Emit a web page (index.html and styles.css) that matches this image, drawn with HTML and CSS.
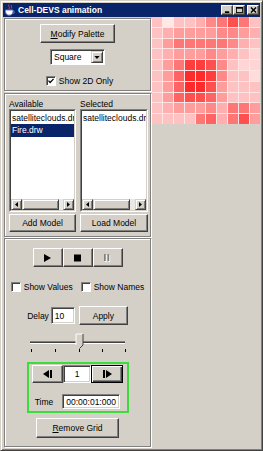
FILE: index.html
```html
<!DOCTYPE html>
<html>
	<head>
		<meta charset="utf-8">
		<title>Cell-DEVS animation</title>
		<link rel="stylesheet" href="styles.css">
	</head>
	<body>
		<div class="window">
			<!-- title bar -->
			<div class="titlebar">
				<svg class="app-icon" viewBox="0 0 12 12">
					<path d="M5 0.5 C3.5 2 6.5 3 5 4.8 M7.5 1 C6.5 2 8.5 3 7.2 4.5" stroke="#e04848" stroke-width="1" fill="none"/>
					<path d="M1.5 6 H9 V7.5 C9 10 7.2 11.2 5.2 11.2 C3.3 11.2 1.5 10 1.5 7.5 Z" fill="#fff" stroke="#6a74c8" stroke-width="1"/>
					<path d="M9 7 C11 7 11 9.5 8.6 9.6" stroke="#6a74c8" fill="none"/>
				</svg>
				<span class="title">Cell-DEVS animation</span>
				<div class="title-btns">
					<span class="tbtn"><svg viewBox="0 0 8 7"><rect x="1" y="5" width="5" height="2" fill="#000"/></svg></span>
					<span class="tbtn"><svg viewBox="0 0 8 7"><rect x="0.5" y="0.5" width="7" height="6" fill="none" stroke="#000"/><rect x="0" y="0" width="8" height="2" fill="#000"/></svg></span>
					<span class="tbtn tbtn-close"><svg viewBox="0 0 8 7"><path d="M1 0.5 L7 6.5 M7 0.5 L1 6.5" stroke="#000" stroke-width="1.6"/></svg></span>
				</div>
			</div>

			<div class="client">
				<div class="left">
					<!-- palette -->
					<div class="panel p-top">
						<button class="btn btn-palette"><u>M</u>odify Palette</button>
						<div class="combo">
							<span class="combo-text">Square</span>
							<span class="combo-arrow"><svg viewBox="0 0 7 4"><path d="M0 0 H7 L3.5 4 Z" fill="#000"/></svg></span>
						</div>
						<div class="checks-one">
							<span class="check"><span class="box"><svg viewBox="0 0 7 7"><path d="M0.5 3 L2.5 5.2 L6.5 1" stroke="#000" stroke-width="1.5" fill="none"/></svg></span>Show 2D Only</span>
						</div>
					</div>

					<!-- models -->
					<div class="panel p-models">
						<div class="model-col">
							<div class="list-label">Available</div>
							<div class="list">
								<div class="list-inner">
									<div class="list-items">
										<div class="item">satelliteclouds.drv</div>
										<div class="item sel">Fire.drw</div>
									</div>
									<div class="hscroll">
										<span class="sb-btn"><svg viewBox="0 0 3 5"><path d="M3 0 V5 L0 2.5 Z" fill="#000"/></svg></span>
										<span class="sb-thumb"></span>
										<span class="sb-track"></span>
										<span class="sb-btn"><svg viewBox="0 0 3 5"><path d="M0 0 V5 L3 2.5 Z" fill="#000"/></svg></span>
									</div>
								</div>
							</div>
							<button class="btn btn-model">Add Model</button>
						</div>
						<div class="model-col model-col-wide">
							<div class="list-label">Selected</div>
							<div class="list">
								<div class="list-inner">
									<div class="list-items">
										<div class="item">satelliteclouds.drv</div>
									</div>
									<div class="hscroll">
										<span class="sb-btn"><svg viewBox="0 0 3 5"><path d="M3 0 V5 L0 2.5 Z" fill="#000"/></svg></span>
										<span class="sb-thumb"></span>
										<span class="sb-track"></span>
										<span class="sb-btn"><svg viewBox="0 0 3 5"><path d="M0 0 V5 L3 2.5 Z" fill="#000"/></svg></span>
									</div>
								</div>
							</div>
							<button class="btn btn-model">Load Model</button>
						</div>
					</div>

					<!-- controls -->
					<div class="panel p-controls">
						<div class="media">
							<button class="btn btn-media"><svg viewBox="0 0 7 8"><path d="M0 0 L7 4 L0 8 Z" fill="#000"/></svg></button>
							<button class="btn btn-media"><svg viewBox="0 0 7 7"><rect width="7" height="7" fill="#000"/></svg></button>
							<button class="btn btn-media"><svg viewBox="0 0 8 9"><rect x="1" y="1" width="2" height="8" fill="#fff"/><rect x="5" y="1" width="2" height="8" fill="#fff"/><rect x="0" y="0" width="2" height="8" fill="#808080"/><rect x="4" y="0" width="2" height="8" fill="#808080"/></svg></button>
						</div>
						<div class="checks">
							<span class="check"><span class="box"></span>Show Values</span>
							<span class="check"><span class="box"></span>Show Names</span>
						</div>
						<div class="delay">
							<span>Delay</span>
							<span class="field delay-field">10</span>
							<button class="btn btn-apply">Apply</button>
						</div>
						<svg class="slider" viewBox="0 0 100 19">
							<rect x="2" y="8" width="95" height="1" fill="#808080"/>
							<rect x="2" y="9" width="95" height="1" fill="#404040"/>
							<rect x="2" y="10" width="95" height="1" fill="#fff"/>
							<path d="M48 1 H55 V12 L51.5 15.5 L48 12 Z" fill="#d4d0c8"/>
							<path d="M48 12 V1 H55" stroke="#fff" fill="none"/>
							<path d="M55 1 V12 L51.5 15.5" stroke="#404040" fill="none"/>
							<g fill="#000">
								<rect x="3" y="16" width="1" height="3"/>
								<rect x="27" y="16" width="1" height="3"/>
								<rect x="51" y="16" width="1" height="3"/>
								<rect x="74" y="16" width="1" height="3"/>
								<rect x="97" y="16" width="1" height="3"/>
							</g>
						</svg>
						<div class="stepbox">
							<div class="step-row">
								<button class="btn btn-step"><svg viewBox="0 0 9 8"><path d="M6 0 V8 L0 4 Z" fill="#000"/><rect x="7" y="0" width="2" height="8" fill="#000"/></svg></button>
								<span class="field step-field">1</span>
								<button class="btn btn-step btn-default"><svg viewBox="0 0 9 8"><rect x="0" y="0" width="2" height="8" fill="#000"/><path d="M3 0 V8 L9 4 Z" fill="#000"/></svg></button>
							</div>
							<div class="time-row">
								<span>Time</span>
								<span class="field time-field">00:00:01:000</span>
							</div>
						</div>
						<button class="btn btn-remove"><u>R</u>emove Grid</button>
					</div>
				</div>

				<div class="right">
					<div class="cells" id="cells"></div>
				</div>
			</div>
		</div>

		<script type="text/javascript">
			// intensity of each cell, 0 = almost white, 5 = full red
			var levels = [
				[1, 0, 1, 1, 1.5, 2.5, 3, 4, 3, 1],
				[1, 1.5, 2, 2, 2, 2, 2.5, 2.5, 2, 1.5],
				[1, 2, 3, 3, 3, 3, 3, 2.5, 1.5, 1],
				[1, 1.5, 2, 2, 2, 2.5, 2, 1.5, 1, 0.5],
				[1, 2, 3, 4.5, 4.5, 4, 2.5, 1, 0.5, 0.5],
				[1, 2, 3.5, 5, 5, 4.5, 2.5, 1, 1, 0.3],
				[1, 2, 3.5, 5, 5, 4, 2, 1, 1, 1],
				[1, 2, 3.5, 4, 4, 3.5, 2, 1, 1, 1],
				[1, 1.5, 2, 2, 2, 2.5, 1.5, 3, 3, 2],
				[1, 1, 1, 1, 3, 3.5, 1.5, 3, 4, 2]
			];
			var cells = document.getElementById("cells");
			for (var r = 0; r < levels.length; r++) {
				for (var c = 0; c < levels[r].length; c++) {
					var g = Math.round(232 - levels[r][c] * 38);
					var d = document.createElement("div");
					d.style.backgroundColor = "rgb(255," + g + "," + g + ")";
					cells.appendChild(d);
				}
			}
		</script>
	</body>
</html>
```

FILE: styles.css
```css
* {
	margin: 0;
	padding: 0;
	box-sizing: border-box;
}

body {
	background-color: #d4d0c8;
	font-family: "Liberation Sans", Arial, sans-serif;
	font-size: 8.5px;
	color: #000;
}

/* window frame */
.window {
	width: 263px;
	height: 451px;
	background-color: #d4d0c8;
	border: 1px solid;
	border-color: #d4d0c8 #404040 #404040 #d4d0c8;
	box-shadow: inset 1px 1px #fff, inset -1px -1px #808080;
	padding: 2px;
	display: flex;
	flex-direction: column;
}

.titlebar {
	height: 14px;
	background-color: #0a246a;
	display: flex;
	align-items: center;
	color: #fff;
	font-weight: bold;
}
.app-icon {
	width: 12px;
	height: 12px;
	margin-left: 1px;
}
.title {
	margin-left: 2px;
}
.title-btns {
	margin-left: auto;
	margin-right: 1px;
	display: flex;
}
.tbtn {
	width: 12px;
	height: 10px;
	background-color: #d4d0c8;
	border: 1px solid;
	border-color: #fff #404040 #404040 #fff;
	box-shadow: inset -1px -1px #808080;
	display: flex;
	align-items: center;
	justify-content: center;
}
.tbtn svg {
	width: 7px;
	height: 6px;
}
.tbtn-close {
	margin-left: 2px;
}

.client {
	flex: 1;
	display: flex;
}

.left {
	width: 149px;
	display: flex;
	flex-direction: column;
}
.right {
	flex: 1;
}

/* etched group panels */
.panel {
	margin: 0 1px;
	border: 1px solid #808080;
	box-shadow: inset 1px 1px #fff, 1px 1px #fff;
}

.p-top {
	margin-top: 1px;
	height: 73px;
	display: flex;
	flex-direction: column;
	align-items: center;
	padding-top: 5px;
}
.p-models {
	margin-top: 2px;
	height: 144px;
	display: flex;
	gap: 4px;
	padding: 5px 0 0 4px;
}
.p-controls {
	margin-top: 1px;
	height: 209px;
	display: flex;
	flex-direction: column;
	align-items: center;
	padding-top: 9px;
}

/* raised button */
.btn {
	font: inherit;
	color: #000;
	background-color: #d4d0c8;
	border: 1px solid;
	border-color: #fff #404040 #404040 #fff;
	box-shadow: inset -1px -1px #808080;
	display: flex;
	align-items: center;
	justify-content: center;
	padding: 0;
}
.btn-palette {
	width: 75px;
	height: 19px;
}

/* sunken field */
.field {
	background-color: #fff;
	border: 1px solid;
	border-color: #808080 #fff #fff #808080;
	box-shadow: inset 1px 1px #404040, inset -1px -1px #d4d0c8;
	display: flex;
	align-items: center;
}

.combo {
	margin-top: 6px;
	width: 55px;
	height: 16px;
	background-color: #fff;
	border: 1px solid;
	border-color: #808080 #fff #fff #808080;
	box-shadow: inset 1px 1px #404040;
	display: flex;
	align-items: center;
	padding: 1px 1px 1px 2px;
}
.combo-text {
	flex: 1;
	padding-left: 1px;
}
.combo-arrow {
	width: 12px;
	height: 12px;
	background-color: #d4d0c8;
	border: 1px solid;
	border-color: #d4d0c8 #404040 #404040 #d4d0c8;
	box-shadow: inset 1px 1px #fff, inset -1px -1px #808080;
	display: flex;
	align-items: center;
	justify-content: center;
}
.combo-arrow svg {
	width: 6px;
	height: 3px;
}

/* check boxes */
.checks-one {
	margin-top: 9px;
	height: 13px;
	display: flex;
	align-items: center;
	margin-left: 4px;
}
.check {
	display: flex;
	align-items: center;
	gap: 3px;
}
.box {
	width: 10px;
	height: 10px;
	background-color: #fff;
	border: 1px solid;
	border-color: #808080 #fff #fff #808080;
	box-shadow: inset 1px 1px #404040;
	display: flex;
	align-items: center;
	justify-content: center;
	padding: 1px 0 0 1px;
}
.box svg {
	width: 6px;
	height: 6px;
}

/* model lists */
.model-col {
	width: 67px;
	display: flex;
	flex-direction: column;
}
.model-col-wide {
	width: 68px;
}
.list-label {
	height: 10px;
	line-height: 10px;
}
.list {
	height: 103px;
	border: 1px solid;
	border-color: #808080 #fff #fff #808080;
}
.list-inner {
	height: 100%;
	border: 1px solid;
	border-color: #404040 #d4d0c8 #d4d0c8 #404040;
	background-color: #fff;
	display: flex;
	flex-direction: column;
}
.list-items {
	flex: 1;
	padding-top: 1px;
	overflow: hidden;
}
.item {
	height: 12px;
	line-height: 12px;
	padding-left: 1px;
	white-space: nowrap;
	overflow: hidden;
}
.item.sel {
	height: 13px;
	line-height: 13px;
	background-color: #0a246a;
	color: #fff;
}
.hscroll {
	height: 11px;
	display: flex;
	background-color: #ebe9e5;
}
.sb-btn {
	width: 11px;
	background-color: #d4d0c8;
	border: 1px solid;
	border-color: #d4d0c8 #404040 #404040 #d4d0c8;
	box-shadow: inset 1px 1px #fff, inset -1px -1px #808080;
	display: flex;
	align-items: center;
	justify-content: center;
}
.sb-btn svg {
	width: 3px;
	height: 5px;
}
.sb-thumb {
	width: 37px;
	background-color: #d4d0c8;
	border: 1px solid;
	border-color: #d4d0c8 #404040 #404040 #d4d0c8;
	box-shadow: inset 1px 1px #fff, inset -1px -1px #808080;
}
.sb-track {
	flex: 1;
}
.btn-model {
	margin-top: 2px;
	height: 18px;
}

/* playback */
.media {
	display: flex;
	height: 19px;
}
.btn-media {
	width: 30px;
	height: 19px;
}
.btn-media svg {
	width: 7px;
	height: 8px;
}
.checks {
	margin-top: 13px;
	height: 13px;
	display: flex;
	align-items: center;
	gap: 8px;
}
.delay {
	margin-top: 13px;
	height: 19px;
	display: flex;
	align-items: center;
}
.delay-field {
	margin-left: 2px;
	width: 24px;
	height: 17px;
	padding-left: 3px;
}
.btn-apply {
	margin-left: 4px;
	width: 49px;
	height: 19px;
}
.slider {
	margin-top: 8px;
	width: 100px;
	height: 19px;
}

/* green frame round the step controls */
.stepbox {
	margin-top: 10px;
	width: 102px;
	height: 51px;
	border: 2px solid #3cdc3c;
	display: flex;
	flex-direction: column;
	align-items: center;
	padding-top: 1px;
}
.step-row {
	display: flex;
	height: 18px;
}
.btn-step {
	width: 31px;
	height: 18px;
}
.btn-step svg {
	width: 9px;
	height: 8px;
}
.btn-default {
	width: 32px;
	border: 1px solid #000;
	box-shadow: inset 1px 1px #fff, inset -1px -1px #404040, inset -2px -2px #808080;
}
.step-field {
	width: 28px;
	height: 18px;
	justify-content: center;
}
.time-row {
	margin-top: 11px;
	display: flex;
	align-items: center;
	gap: 9px;
}
.time-field {
	width: 58px;
	height: 15px;
	padding-left: 3px;
}
.btn-remove {
	margin-top: 5px;
	width: 83px;
	height: 20px;
}

/* cell grid */
.cells {
	width: 108px;
	height: 107px;
	display: grid;
	grid-template-columns: repeat(10, 1fr);
	grid-template-rows: repeat(10, 1fr);
	gap: 1px;
	background-color: #ffe4e4;
}
```
